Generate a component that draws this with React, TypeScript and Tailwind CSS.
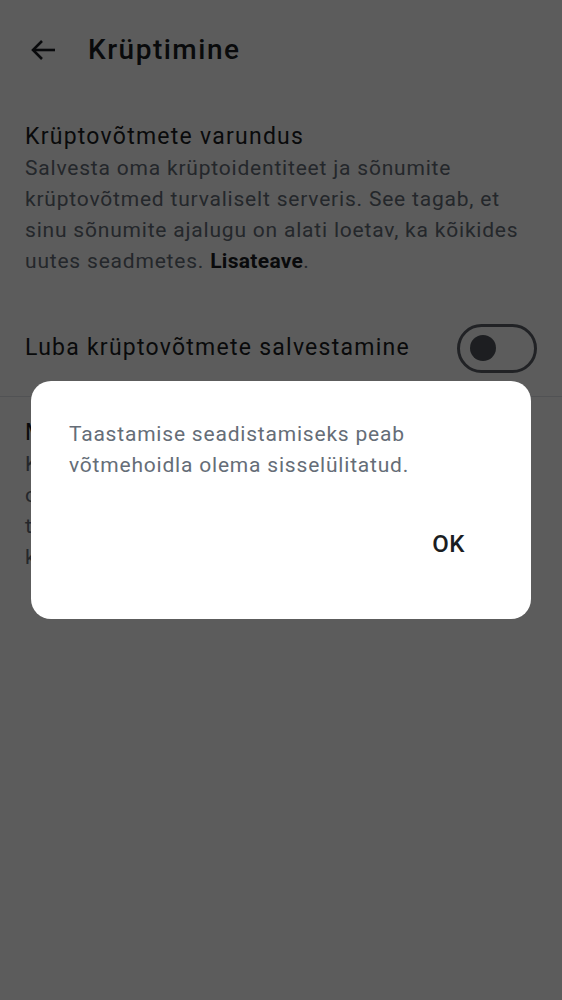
function BackArrow() {
  return (
    <svg width="26" height="22" viewBox="0 0 26 22" fill="none" className="text-[#1b1d22]">
      <path d="M12 2 L3 11 L12 20" stroke="currentColor" strokeWidth="2.6" strokeLinejoin="miter" />
      <path d="M3 11 H25" stroke="currentColor" strokeWidth="2.6" />
    </svg>
  );
}

export default function App() {
  return (
    <div className="relative h-[1000px] w-[562px] overflow-hidden bg-white font-['Roboto',sans-serif]">
      {/* Top bar */}
      <div className="flex h-[100px] items-center pl-[30px]">
        <BackArrow />
        <h1 className="ml-[32px] text-[28px] font-medium tracking-[1.5px] text-[#1b1d22]">Krüptimine</h1>
      </div>

      {/* Backup section */}
      <div className="px-[25px] pt-[21px]">
        <div className="text-[23px] leading-[32px] tracking-[1.25px] text-[#1b1d22]">Krüptovõtmete varundus</div>
        <p className="text-[21px] leading-[31px] tracking-[0.8px] text-[#656d77]">
          Salvesta oma krüptoidentiteet ja sõnumite
          <br />
          krüptovõtmed turvaliselt serveris. See tagab, et
          <br />
          sinu sõnumite ajalugu on alati loetav, ka kõikides
          <br />
          uutes seadmetes. <span className="font-bold tracking-[0.3px] text-[#1b1d22]">Lisateave</span>.
        </p>
      </div>

      <div className="mt-[31px] flex h-[80px] items-center justify-between px-[25px]">
        <span className="text-[23px] tracking-[1.25px] text-[#1b1d22]">Luba krüptovõtmete salvestamine</span>
        <div className="flex h-[49px] w-[80px] items-center rounded-full border-[3px] border-[#5b6068] pl-[10px]">
          <div className="h-[26px] w-[26px] rounded-full bg-[#50555c]" />
        </div>
      </div>

      <div className="mt-[8px] h-px bg-[#e1e4e8]" />

      {/* Recovery section */}
      <div className="px-[25px] pt-[20px]">
        <div className="text-[23px] leading-[32px] tracking-[1.25px] text-[#1b1d22]">Muuda taastevõtit</div>
        <p className="whitespace-nowrap text-[21px] leading-[31px] tracking-[0.8px] text-[#656d77]">
          Kui sa oled kaotanud oma taastevõtme, saad
          <br />
          oma krüptoidentiteedi ja sõnumid taastada
          <br />
          teistest seadmetest, kui sul on juurdepääs
          <br />
          kinnitatud seadmetele.
        </p>
      </div>

      {/* Scrim + dialog */}
      <div className="fixed inset-0 flex items-center justify-center bg-black/[0.64]">
        <div className="flex h-[238px] w-[500px] flex-col rounded-[20px] bg-white pl-[38px] pr-[66px] pt-[38px]">
          <p className="text-[21px] leading-[31px] tracking-[0.8px] text-[#656d77]">
            Taastamise seadistamiseks peab
            <br />
            võtmehoidla olema sisselülitatud.
          </p>
          <div className="mb-[60px] mt-auto flex justify-end">
            <button className="text-[24px] font-medium leading-[30px] tracking-[0.5px] text-[#1b1d22]">OK</button>
          </div>
        </div>
      </div>
    </div>
  );
}
